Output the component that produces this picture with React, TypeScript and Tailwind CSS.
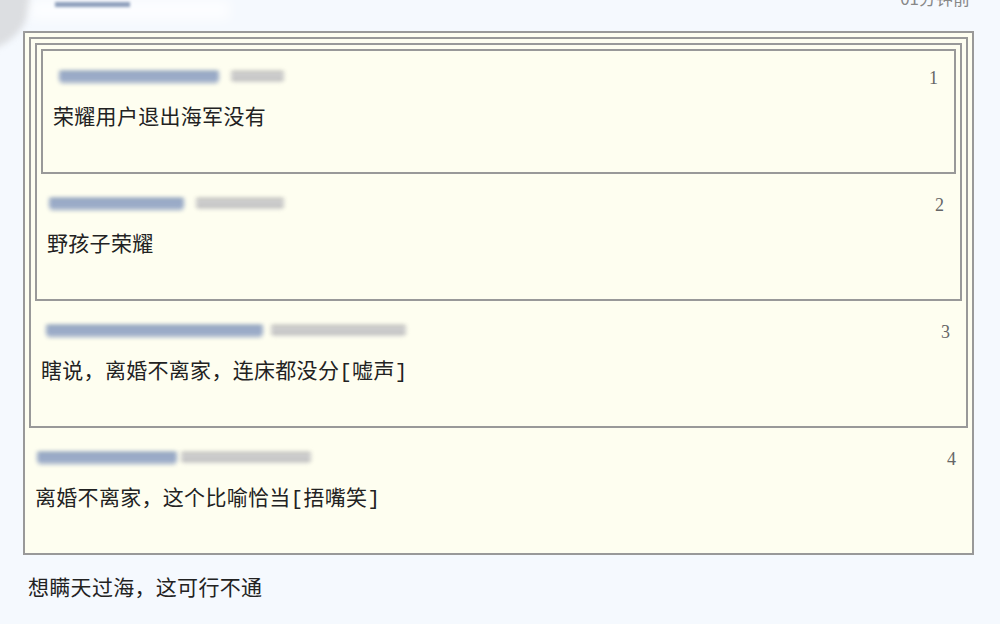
import React from "react";

type Item = {
    n: number;
    text: string;
    ml: string;
    blue: string;
    gap: string;
    gray: string;
};

const items: Item[] = [
    { n: 1, text: "荣耀用户退出海军没有", ml: "ml-[6px]", blue: "w-[160px]", gap: "ml-[12px]", gray: "w-[53px]" },
    { n: 2, text: "野孩子荣耀", ml: "ml-[2px]", blue: "w-[135px]", gap: "ml-[12px]", gray: "w-[88px]" },
    { n: 3, text: "瞎说，离婚不离家，连床都没分[嘘声]", ml: "ml-[5px]", blue: "w-[217px]", gap: "ml-[8px]", gray: "w-[135px]" },
    { n: 4, text: "离婚不离家，这个比喻恰当[捂嘴笑]", ml: "ml-[2px]", blue: "w-[140px]", gap: "ml-[4px]", gray: "w-[130px]" },
];

// blurred user name placeholder
function NameBlur({ item }: { item: Item }) {
    return (
        <div className={`flex items-center h-4 ${item.ml}`}>
            <div
                className={`${item.blue} h-[13px] blur-[2px] rounded-sm bg-[linear-gradient(to_bottom,transparent_8%,#6a82ab_8%,#6a82ab_28%,#d3dbe8_28%,#d3dbe8_50%,#7b90b5_50%,#7b90b5_72%,#c6d0e0_72%,#c6d0e0_86%,#8a9cbc_86%)]`}
            />
            <div
                className={`${item.gap} ${item.gray} h-[12px] blur-[2px] rounded-sm bg-[linear-gradient(to_bottom,transparent_10%,#b0b0b0_10%,#b0b0b0_32%,#e2e2e2_32%,#e2e2e2_55%,#b4b4b4_55%,#b4b4b4_80%,#d6d6d6_80%)]`}
            />
        </div>
    );
}

function Comment({ item }: { item: Item }) {
    return (
        <div className="h-[121px] pl-[10px] pr-4 pt-[17px]">
            <div className="flex items-center justify-between h-4">
                <NameBlur item={item} />
                <span className="mt-1 text-[18px] leading-4 text-[#666] font-['Liberation_Serif',serif]">{item.n}</span>
            </div>
            <p className="mt-[21px] text-[21px] leading-[28px] tracking-[0.3px] text-[#222] font-['Liberation_Mono','Noto_Sans_CJK_SC',monospace]">
                {item.text}
            </p>
        </div>
    );
}

function Box({ level }: { level: number }) {
    const item = items[level - 1];
    return (
        <div className={`border-2 border-[#999] bg-[#fefef0] ${level < 4 ? "m-1" : ""}`}>
            {level > 1 && <Box level={level - 1} />}
            <Comment item={item} />
        </div>
    );
}

export default function App() {
    return (
        <div className="relative w-[1000px] h-[624px] overflow-hidden bg-[#f5f9fe] font-['Noto_Sans_CJK_SC','Noto_Sans',sans-serif]">
            {/* leftovers of the comment above, cut by the frame */}
            <div className="absolute -left-[70px] -top-[50px] w-[100px] h-[100px] rounded-full bg-[#dcdee1] blur-[3px]" />
            <div className="absolute left-[30px] top-0 w-[200px] h-[20px] bg-white/70 blur-[6px]" />
            <div className="absolute left-[55px] top-[2px] w-[75px] h-[5px] bg-[#8c9dbb] blur-[1.5px]" />

            <div className="h-[31px] flex justify-end">
                <span className="-mt-[13px] mr-[30px] text-[17px] leading-[22px] text-[#888]">01分钟前</span>
            </div>

            <div className="ml-[23px] w-[951px]">
                <Box level={4} />
            </div>

            <p className="mt-[17px] ml-[28px] text-[21px] leading-[28px] tracking-[0.3px] text-[#222]">想瞒天过海，这可行不通</p>
        </div>
    );
}
